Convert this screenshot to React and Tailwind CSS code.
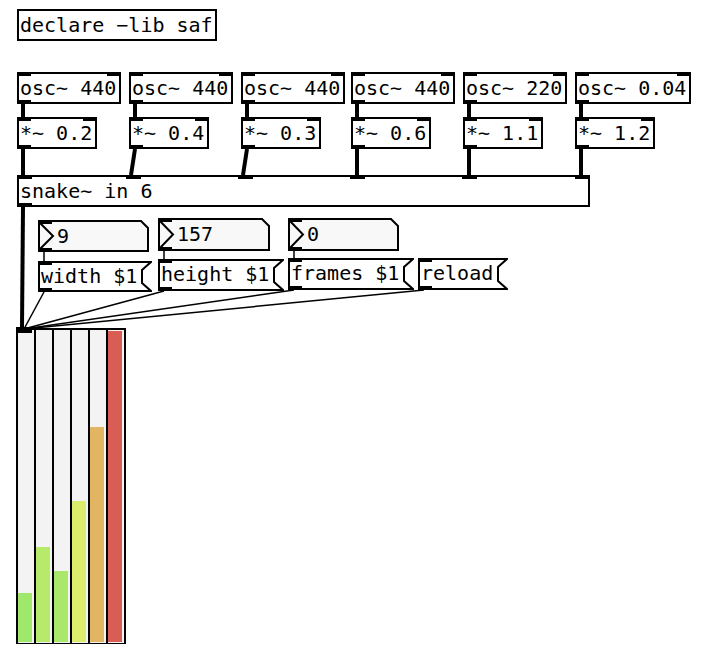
import React from 'react';

const MONO = "font-['DejaVu_Sans_Mono',monospace] text-[20px] leading-[28px] whitespace-nowrap";

// object boxes: x, y, width, text, inlet offsets, outlet offsets
const objects = [
    { x: 17, y: 9, w: 200, text: 'declare −lib saf', ins: [], outs: [] },
    { x: 17, y: 72, w: 104, text: 'osc~ 440', ins: [0, 90], outs: [0] },
    { x: 129, y: 72, w: 104, text: 'osc~ 440', ins: [0, 90], outs: [0] },
    { x: 241, y: 72, w: 104, text: 'osc~ 440', ins: [0, 90], outs: [0] },
    { x: 351, y: 72, w: 104, text: 'osc~ 440', ins: [0, 90], outs: [0] },
    { x: 463, y: 72, w: 104, text: 'osc~ 220', ins: [0, 90], outs: [0] },
    { x: 575, y: 72, w: 116, text: 'osc~ 0.04', ins: [0, 102], outs: [0] },
    { x: 17, y: 117, w: 80, text: '*~ 0.2', ins: [0, 66], outs: [0] },
    { x: 129, y: 117, w: 80, text: '*~ 0.4', ins: [0, 66], outs: [0] },
    { x: 241, y: 117, w: 80, text: '*~ 0.3', ins: [0, 66], outs: [0] },
    { x: 351, y: 117, w: 80, text: '*~ 0.6', ins: [0, 66], outs: [0] },
    { x: 463, y: 117, w: 80, text: '*~ 1.1', ins: [0, 66], outs: [0] },
    { x: 575, y: 117, w: 80, text: '*~ 1.2', ins: [0, 66], outs: [0] },
    { x: 17, y: 175, w: 573, text: 'snake~ in 6', ins: [0, 109, 221, 333, 445, 558], outs: [0], iow: 15 },
];

const numbers = [
    { x: 38, y: 220, w: 111, h: 32, value: '9' },
    { x: 158, y: 218, w: 112, h: 33, value: '157' },
    { x: 288, y: 218, w: 111, h: 33, value: '0' },
];

const messages = [
    { x: 38, y: 261, w: 104, h: 31, text: 'width $1' },
    { x: 158, y: 259, w: 116, h: 32, text: 'height $1' },
    { x: 288, y: 258, w: 116, h: 32, text: 'frames $1' },
    { x: 418, y: 258, w: 80, h: 32, text: 'reload' },
];

// signal (thick) and control (thin) connections
const signalLines = [
    [23, 104, 23, 117], [135, 104, 135, 117], [247, 104, 247, 117],
    [357, 104, 357, 117], [469, 104, 469, 117], [581, 104, 581, 117],
    [23, 149, 23, 175], [135, 149, 131, 175], [247, 149, 243, 175],
    [357, 149, 357, 175], [469, 149, 469, 175], [581, 149, 581, 175],
    [23, 207, 22, 328],
];

const controlLines = [
    [44, 252, 44, 261], [164, 251, 164, 259], [294, 251, 294, 258],
    [44, 292, 24, 329], [164, 291, 24, 329], [294, 290, 24, 329], [424, 290, 24, 329],
];

const meters = [
    { h: 'h-[49px]', color: 'bg-[#9fe86b]' },
    { h: 'h-[95px]', color: 'bg-[#b7ea6b]' },
    { h: 'h-[71px]', color: 'bg-[#a9e86b]' },
    { h: 'h-[141px]', color: 'bg-[#dcec6d]' },
    { h: 'h-[215px]', color: 'bg-[#e2b563]' },
    { h: 'h-[311px]', color: 'bg-[#d95c55]' },
];

function Port({ left, top, width = 14, height = 4 }) {
    return <div className="absolute bg-black" style={{ left, top, width, height }} />;
}

function PdObject({ x, y, w, text, ins, outs, iow = 14 }) {
    return (
        <div className="absolute bg-white border-2 border-black h-[32px] pl-[1px]" style={{ left: x, top: y, width: w }}>
            <span className={`${MONO} block text-black`}>{text}</span>
            {ins.map((o, i) => <Port key={'i' + i} left={o - 2} top={-2} width={iow} />)}
            {outs.map((o, i) => <Port key={'o' + i} left={o - 2} top={26} width={iow} />)}
        </div>
    );
}

function NumberBox({ x, y, w, h, value }) {
    return (
        <div className="absolute" style={{ left: x, top: y, width: w, height: h }}>
            <svg className="absolute inset-0" width={w} height={h}>
                <polygon points={`1,1 ${w - 8},1 ${w - 1},8 ${w - 1},${h - 1} 1,${h - 1}`} fill="#f8f8f8" stroke="#000" strokeWidth="2" />
                <polyline points={`1,2 15,${h / 2} 1,${h - 2}`} fill="none" stroke="#000" strokeWidth="2" />
            </svg>
            <span className={`${MONO} absolute left-[19px] top-[2px] text-black`}>{value}</span>
            <Port left={0} top={0} />
            <Port left={0} top={h - 4} />
        </div>
    );
}

function MessageBox({ x, y, w, h, text }) {
    const W = w + 10;
    return (
        <div className="absolute" style={{ left: x, top: y, width: W, height: h }}>
            <svg className="absolute inset-0" width={W} height={h}>
                <polygon points={`1,1 ${W - 1},1 ${w},9 ${w},${h - 9} ${W - 1},${h - 1} 1,${h - 1}`} fill="#fff" stroke="#000" strokeWidth="2" />
            </svg>
            <span className={`${MONO} absolute left-[3px] top-[1px] text-black`}>{text}</span>
            <Port left={0} top={0} />
            <Port left={0} top={h - 4} />
        </div>
    );
}

function Meter() {
    return (
        <div className="absolute left-[16px] top-[328px] w-[110px] h-[316px] border-2 border-black flex">
            {meters.map((m, i) => (
                <div key={i} className={`w-[16px] h-full bg-[#f3f3f3] flex items-end pb-[1px] box-content ${i > 0 ? 'border-l-2 border-black' : ''}`}>
                    <div className={`w-[14px] ${m.h} ${m.color}`} />
                </div>
            ))}
        </div>
    );
}

export default function App() {
    return (
        <div className="relative w-[720px] h-[656px] bg-white overflow-hidden">
            <svg className="absolute inset-0 pointer-events-none" width="720" height="656">
                {signalLines.map(([x1, y1, x2, y2], i) => (
                    <line key={'s' + i} x1={x1} y1={y1} x2={x2} y2={y2} stroke="#000" strokeWidth="4" />
                ))}
                {controlLines.map(([x1, y1, x2, y2], i) => (
                    <line key={'c' + i} x1={x1} y1={y1} x2={x2} y2={y2} stroke="#000" strokeWidth="1.5" />
                ))}
            </svg>

            {objects.map((o, i) => <PdObject key={i} {...o} />)}
            {numbers.map((n, i) => <NumberBox key={i} {...n} />)}
            {messages.map((m, i) => <MessageBox key={i} {...m} />)}

            <Meter />
            <Port left={16} top={327} width={16} height={6} />
        </div>
    );
}
